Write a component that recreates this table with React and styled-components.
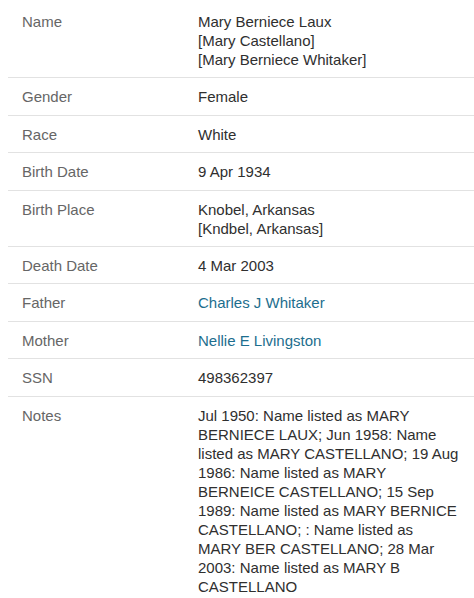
import React from "react";
import styled, { createGlobalStyle } from "styled-components";

const GlobalStyle = createGlobalStyle`
  body {
    margin: 0;
    background: #ffffff;
    font-family: "Liberation Sans", Arial, sans-serif;
  }
`;

const Table = styled.div`
  margin: 3px 0 0 8px;
`;

const Row = styled.div`
  display: grid;
  grid-template-columns: 176px 1fr;
  padding: 9px 12px 8.4px 14px;
  border-bottom: ${(p) => (p.last ? "none" : "1px solid #e2e2e2")};
  font-size: 15px;
  line-height: 19px;
`;

const Label = styled.div`
  color: #666666;
`;

const Value = styled.div`
  color: #2f2f2f;
`;

const Line = styled.div`
  white-space: nowrap;
`;

const PersonLink = styled.a`
  color: #1d6e8e;
  text-decoration: none;
`;

// notes wrap as in the source record
const rows = [
  { label: "Name", lines: ["Mary Berniece Laux", "[Mary Castellano]", "[Mary Berniece Whitaker]"] },
  { label: "Gender", lines: ["Female"] },
  { label: "Race", lines: ["White"] },
  { label: "Birth Date", lines: ["9 Apr 1934"] },
  { label: "Birth Place", lines: ["Knobel, Arkansas", "[Kndbel, Arkansas]"] },
  { label: "Death Date", lines: ["4 Mar 2003"] },
  { label: "Father", link: "Charles J Whitaker" },
  { label: "Mother", link: "Nellie E Livingston" },
  { label: "SSN", lines: ["498362397"] },
  {
    label: "Notes",
    lines: [
      "Jul 1950: Name listed as MARY",
      "BERNIECE LAUX; Jun 1958: Name",
      "listed as MARY CASTELLANO; 19 Aug",
      "1986: Name listed as MARY",
      "BERNEICE CASTELLANO; 15 Sep",
      "1989: Name listed as MARY BERNICE",
      "CASTELLANO; : Name listed as",
      "MARY BER CASTELLANO; 28 Mar",
      "2003: Name listed as MARY B",
      "CASTELLANO",
    ],
  },
];

const App = () => {
  return (
    <>
      <GlobalStyle />
      <Table>
        {rows.map((r, i) => (
          <Row key={r.label} last={i === rows.length - 1}>
            <Label>{r.label}</Label>
            <Value>
              {r.link ? (
                <PersonLink href="#">{r.link}</PersonLink>
              ) : (
                r.lines.map((l) => <Line key={l}>{l}</Line>)
              )}
            </Value>
          </Row>
        ))}
      </Table>
    </>
  );
};

export default App;
